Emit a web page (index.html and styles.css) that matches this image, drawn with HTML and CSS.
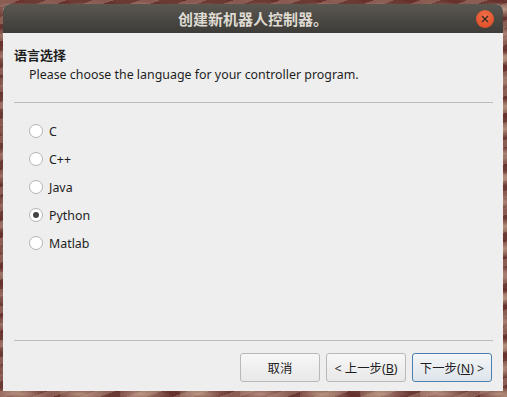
FILE: index.html
```html
<!DOCTYPE html>
<html lang="zh">
  <head>
    <meta charset="UTF-8" />
    <title>创建新机器人控制器。</title>
    <link rel="stylesheet" href="styles.css">
  </head>
  <body>
    <div class="window">
      <div class="titlebar">
        <span class="title">创建新机器人控制器。</span>
        <span class="close">
          <svg width="8" height="8" viewBox="0 0 8 8">
            <path d="M1 1 L7 7 M7 1 L1 7" stroke="#3a2a20" stroke-width="1.4" />
          </svg>
        </span>
      </div>
      <!-- .titlebar -->

      <div class="content">
        <div class="page-head">
          <div class="heading">语言选择</div>
          <div class="subtitle">Please choose the language for your controller program.</div>
        </div>
        <hr class="sep" />

        <div class="options">
          <label class="option"><span class="radio"></span>C</label>
          <label class="option"><span class="radio"></span>C++</label>
          <label class="option"><span class="radio"></span>Java</label>
          <label class="option"><span class="radio checked"></span>Python</label>
          <label class="option"><span class="radio"></span>Matlab</label>
        </div>

        <hr class="sep" />
        <div class="buttons">
          <button>取消</button>
          <button>&lt; 上一步(<u>B</u>)</button>
          <button class="default">下一步(<u>N</u>) &gt;</button>
        </div>
      </div>
      <!-- .content -->
    </div>
    <!-- .window -->
  </body>
</html>
```

FILE: styles.css
```css
* {
  box-sizing: border-box;
  margin: 0;
  padding: 0;
}

body {
  width: 507px;
  height: 397px;
  overflow: hidden;
  font-family: 'Noto Sans', 'Noto Sans CJK SC', sans-serif;
  font-size: 12.4px;
  color: #1e1e1e;
  background-color: #6b3a34;
  background-image:
    radial-gradient(ellipse 30px 8px at 20px 10px, rgba(200, 165, 145, 0.8), transparent),
    repeating-linear-gradient(160deg, rgba(170, 130, 115, 0.5) 0 7px, transparent 7px 16px),
    repeating-linear-gradient(20deg, rgba(100, 40, 40, 0.5) 0 5px, transparent 5px 15px);
  background-size: 60px 24px, auto, auto;
  padding: 4px 4px 6px 3px;
}

.window {
  width: 500px;
  height: 387px;
  display: flex;
  flex-direction: column;
  border-radius: 7px 7px 0 0;
  overflow: hidden;
  background: #eeeeee;
}

.titlebar {
  height: 29px;
  flex-shrink: 0;
  position: relative;
  display: flex;
  align-items: center;
  justify-content: center;
  background: linear-gradient(#5a5751, #3e3c38);
}

.title {
  color: #dfdbd2;
  font-size: 15px;
  font-weight: bold;
  font-family: 'Noto Sans CJK SC', sans-serif;
}

.close {
  position: absolute;
  right: 9px;
  top: 6px;
  width: 18px;
  height: 18px;
  border-radius: 50%;
  background: radial-gradient(circle at 50% 35%, #f2704a, #d9461e);
  display: flex;
  align-items: center;
  justify-content: center;
}

.content {
  flex: 1;
  display: flex;
  flex-direction: column;
  padding: 0 10px 0 11px;
}

.page-head {
  padding: 13px 0 17px;
}

.heading {
  font-weight: bold;
  font-family: 'Noto Sans CJK SC', sans-serif;
  font-size: 13px;
  line-height: 17px;
}

.subtitle {
  padding-left: 15px;
  margin-top: 2px;
  line-height: 20px;
}

.sep {
  border: none;
  border-top: 1px solid #bcbcbc;
  height: 0;
}

.options {
  flex: 1;
  display: flex;
  flex-direction: column;
  gap: 8px;
  padding: 18px 0 0 15px;
}

.option {
  display: flex;
  align-items: center;
  gap: 6px;
  height: 20px;
}

.radio {
  width: 14px;
  height: 14px;
  border-radius: 50%;
  border: 1px solid #b4b4b4;
  background: #fff;
  display: flex;
  align-items: center;
  justify-content: center;
}

.radio.checked::after {
  content: '';
  width: 6px;
  height: 6px;
  border-radius: 50%;
  background: #444;
}

.buttons {
  display: flex;
  justify-content: flex-end;
  gap: 6px;
  padding: 12px 1px 9px 0;
}

button {
  width: 80px;
  height: 29px;
  border: 1px solid #b9b9b9;
  border-radius: 3px;
  background: linear-gradient(#f7f7f7, #e8e8e8);
  font-family: 'Noto Sans', 'Noto Sans CJK SC', sans-serif;
  font-size: 12.4px;
  color: #1e1e1e;
}

button.default {
  border-color: #4a7eb0;
  background: linear-gradient(#f4f6f8, #dde4ea);
}
```
